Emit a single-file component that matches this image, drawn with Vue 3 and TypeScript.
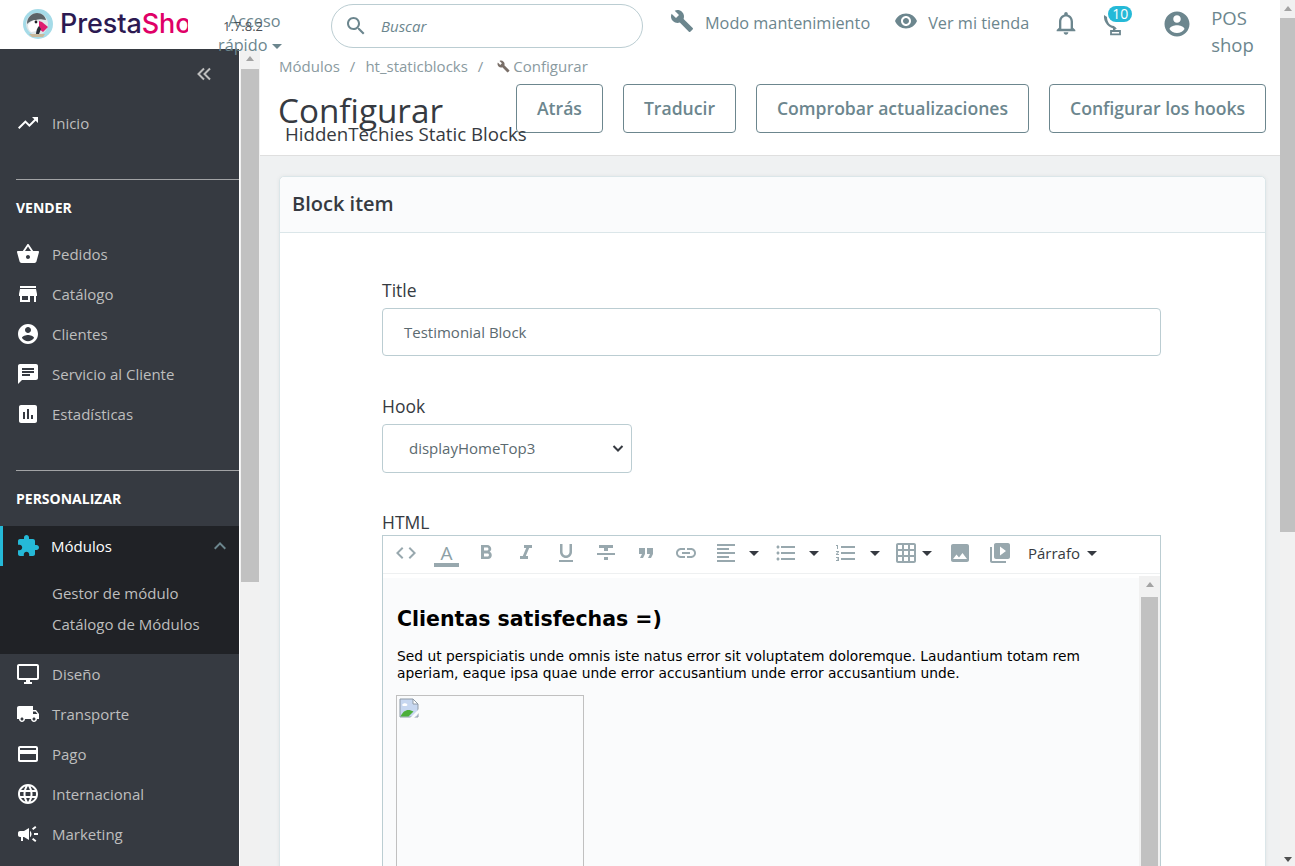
<script setup lang="ts">
interface NavItem { label: string; d: string; }
const icons = {
  trend: 'M16 6l2.29 2.29-4.88 4.88-4-4L2 16.59 3.41 18l6-6 4 4 6.3-6.29L22 12V6z',
  basket: 'M17.21 9l-4.38-6.56c-.19-.28-.51-.42-.83-.42-.32 0-.64.14-.83.43L6.79 9H2c-.55 0-1 .45-1 1 0 .09.01.18.04.27l2.54 9.27c.23.84 1 1.46 1.92 1.46h13c.92 0 1.69-.62 1.93-1.46l2.54-9.27L23 10c0-.55-.45-1-1-1h-4.79zM9 9l3-4.4L15 9H9zm3 8c-1.1 0-2-.9-2-2s.9-2 2-2 2 .9 2 2-.9 2-2 2z',
  store: 'M20 4H4v2h16V4zm1 10v-2l-1-5H4l-1 5v2h1v6h10v-6h4v6h2v-6h1zm-9 4H6v-4h6v4z',
  account: 'M12 2C6.48 2 2 6.48 2 12s4.48 10 10 10 10-4.48 10-10S17.52 2 12 2zm0 3c1.66 0 3 1.34 3 3s-1.34 3-3 3-3-1.34-3-3 1.34-3 3-3zm0 14.2c-2.5 0-4.71-1.28-6-3.22.03-1.99 4-3.08 6-3.08 1.99 0 5.97 1.09 6 3.08-1.29 1.94-3.5 3.22-6 3.22z',
  chat: 'M20 2H4c-1.1 0-1.99.9-1.99 2L2 22l4-4h14c1.1 0 2-.9 2-2V4c0-1.1-.9-2-2-2zM6 9h12v2H6V9zm8 5H6v-2h8v2zm4-6H6V6h12v2z',
  stats: 'M19 3H5c-1.1 0-2 .9-2 2v14c0 1.1.9 2 2 2h14c1.1 0 2-.9 2-2V5c0-1.1-.9-2-2-2zM9 17H7v-7h2v7zm4 0h-2V7h2v10zm4 0h-2v-4h2v4z',
  ext: 'M20.5 11H19V7c0-1.1-.9-2-2-2h-4V3.5C13 2.12 11.88 1 10.5 1S8 2.12 8 3.5V5H4c-1.1 0-1.99.9-1.99 2v3.8H3.5c1.49 0 2.7 1.21 2.7 2.7s-1.21 2.7-2.7 2.7H2V20c0 1.1.9 2 2 2h3.8v-1.5c0-1.49 1.21-2.7 2.7-2.7 1.49 0 2.7 1.21 2.7 2.7V22H17c1.1 0 2-.9 2-2v-4h1.5c1.38 0 2.5-1.12 2.5-2.5S21.88 11 20.5 11z',
  desktop: 'M21 2H3c-1.1 0-2 .9-2 2v12c0 1.1.9 2 2 2h7v2H8v2h8v-2h-2v-2h7c1.1 0 2-.9 2-2V4c0-1.1-.9-2-2-2zm0 14H3V4h18v12z',
  truck: 'M20 8h-3V4H3c-1.1 0-2 .9-2 2v11h2c0 1.66 1.34 3 3 3s3-1.34 3-3h6c0 1.66 1.34 3 3 3s3-1.34 3-3h2v-5l-3-4zM6 18.5c-.83 0-1.5-.67-1.5-1.5s.67-1.5 1.5-1.5 1.5.67 1.5 1.5-.67 1.5-1.5 1.5zm13.5-9l1.96 2.5H17V9.5h2.5zm-1.5 9c-.83 0-1.5-.67-1.5-1.5s.67-1.5 1.5-1.5 1.5.67 1.5 1.5-.67 1.5-1.5 1.5z',
  card: 'M20 4H4c-1.11 0-1.99.89-1.99 2L2 18c0 1.11.89 2 2 2h16c1.11 0 2-.89 2-2V6c0-1.11-.89-2-2-2zm0 14H4v-6h16v6zm0-10H4V6h16v2z',
  globe: 'M11.99 2C6.47 2 2 6.48 2 12s4.47 10 9.99 10C17.52 22 22 17.52 22 12S17.52 2 11.99 2zm6.93 6h-2.95c-.32-1.25-.78-2.45-1.38-3.56 1.84.63 3.37 1.91 4.33 3.56zM12 4.04c.83 1.2 1.48 2.53 1.91 3.96h-3.82c.43-1.43 1.08-2.76 1.91-3.96zM4.26 14C4.1 13.36 4 12.69 4 12s.1-1.36.26-2h3.38c-.08.66-.14 1.32-.14 2 0 .68.06 1.34.14 2H4.26zm.82 2h2.95c.32 1.25.78 2.45 1.38 3.56-1.84-.63-3.37-1.9-4.33-3.56zm2.95-8H5.08c.96-1.66 2.49-2.93 4.33-3.56C8.81 5.55 8.35 6.75 8.03 8zM12 19.96c-.83-1.2-1.48-2.53-1.91-3.96h3.82c-.43 1.43-1.08 2.76-1.91 3.96zM14.34 14H9.66c-.09-.66-.16-1.32-.16-2 0-.68.07-1.35.16-2h4.68c.09.65.16 1.32.16 2 0 .68-.07 1.34-.16 2zm.25 5.56c.6-1.11 1.06-2.31 1.38-3.56h2.95c-.96 1.65-2.49 2.93-4.33 3.56zM16.36 14c.08-.66.14-1.32.14-2 0-.68-.06-1.34-.14-2h3.38c.16.64.26 1.31.26 2s-.1 1.36-.26 2h-3.38z',
  campaign: 'M18 11v2h4v-2h-4zm-2 6.61c.96.71 2.21 1.65 3.2 2.39.4-.53.8-1.07 1.2-1.6-.99-.74-2.24-1.68-3.2-2.4-.4.54-.8 1.08-1.2 1.61zM20.4 5.6c-.4-.53-.8-1.07-1.2-1.6-.99.74-2.24 1.68-3.2 2.4.4.53.8 1.07 1.2 1.6.96-.72 2.21-1.65 3.2-2.4zM4 9c-1.1 0-2 .9-2 2v2c0 1.1.9 2 2 2h1v4h2v-4h1l5 3V6L8 9H4zm11.5 3c0-1.33-.58-2.53-1.5-3.35v6.69c.92-.81 1.5-2.01 1.5-3.34z',
  wrench: 'M22.7 19l-9.1-9.1c.9-2.3.4-5-1.5-6.9-2-2-5-2.4-7.4-1.3L9 6 6 9 1.6 4.7C.4 7.1.9 10.1 2.9 12.1c1.9 1.9 4.6 2.4 6.9 1.5l9.1 9.1c.4.4 1 .4 1.4 0l2.3-2.3c.5-.4.5-1.1.1-1.4z',
  eye: 'M12 4.5C7 4.5 2.73 7.61 1 12c1.73 4.39 6 7.5 11 7.5s9.27-3.11 11-7.5c-1.73-4.39-6-7.5-11-7.5zM12 17c-2.76 0-5-2.24-5-5s2.24-5 5-5 5 2.24 5 5-2.24 5-5 5zm0-8c-1.66 0-3 1.34-3 3s1.34 3 3 3 3-1.34 3-3-1.34-3-3-3z',
  bell: 'M12 22c1.1 0 2-.9 2-2h-4c0 1.1.9 2 2 2zm6-6v-5c0-3.07-1.63-5.64-4.5-6.32V4c0-.83-.67-1.5-1.5-1.5s-1.5.67-1.5 1.5v.68C7.64 5.36 6 7.92 6 11v5l-2 2v1h16v-1l-2-2zm-2 1H8v-6c0-2.48 1.51-4.5 4-4.5s4 2.02 4 4.5v6z',
  search: 'M15.5 14h-.79l-.28-.27C15.41 12.59 16 11.11 16 9.5 16 5.91 13.09 3 9.5 3S3 5.91 3 9.5 5.91 16 9.5 16c1.61 0 3.09-.59 4.23-1.57l.27.28v.79l5 4.99L20.49 19l-4.99-5zm-6 0C7.01 14 5 11.99 5 9.5S7.01 5 9.5 5 14 7.01 14 9.5 11.99 14 9.5 14z',
  chevUp: 'M7.41 15.41L12 10.83l4.59 4.58L18 14l-6-6-6 6z',
  code: 'M9.4 16.6L4.8 12l4.6-4.6L8 6l-6 6 6 6 1.4-1.4zm5.2 0l4.6-4.6-4.6-4.6L16 6l6 6-6 6-1.4-1.4z',
  bold: 'M15.6 10.79c.97-.67 1.65-1.77 1.65-2.79 0-2.26-1.75-4-4-4H7v14h7.04c2.09 0 3.71-1.7 3.71-3.79 0-1.52-.86-2.82-2.15-3.42zM10 6.5h3c.83 0 1.5.67 1.5 1.5s-.67 1.5-1.5 1.5h-3v-3zm3.5 9H10v-3h3.5c.83 0 1.5.67 1.5 1.5s-.67 1.5-1.5 1.5z',
  italic: 'M10 4v3h2.21l-3.42 8H6v3h8v-3h-2.21l3.42-8H18V4z',
  underline: 'M12 17c3.31 0 6-2.69 6-6V3h-2.5v8c0 1.93-1.57 3.5-3.5 3.5S8.5 12.93 8.5 11V3H6v8c0 3.31 2.69 6 6 6zm-7 2v2h14v-2H5z',
  strike: 'M10 19h4v-3h-4v3zM5 4v3h5v3h4V7h5V4H5zM3 14h18v-2H3v2z',
  quote: 'M6 17h3l2-4V7H5v6h3zm8 0h3l2-4V7h-6v6h3z',
  link: 'M3.9 12c0-1.71 1.39-3.1 3.1-3.1h4V7H7c-2.76 0-5 2.24-5 5s2.24 5 5 5h4v-1.9H7c-1.71 0-3.1-1.39-3.1-3.1zM8 13h8v-2H8v2zm9-6h-4v1.9h4c1.71 0 3.1 1.39 3.1 3.1s-1.39 3.1-3.1 3.1h-4V17h4c2.76 0 5-2.24 5-5s-2.24-5-5-5z',
  alignLeft: 'M15 15H3v2h12v-2zm0-8H3v2h12V7zM3 13h18v-2H3v2zm0 8h18v-2H3v2zM3 3v2h18V3H3z',
  bullets: 'M4 10.5c-.83 0-1.5.67-1.5 1.5s.67 1.5 1.5 1.5 1.5-.67 1.5-1.5-.67-1.5-1.5-1.5zm0-6c-.83 0-1.5.67-1.5 1.5S3.17 7.5 4 7.5 5.5 6.83 5.5 6 4.83 4.5 4 4.5zm0 12c-.83 0-1.5.68-1.5 1.5s.68 1.5 1.5 1.5 1.5-.68 1.5-1.5-.67-1.5-1.5-1.5zM7 19h14v-2H7v2zm0-6h14v-2H7v2zm0-8v2h14V5H7z',
  numbers: 'M2 17h2v.5H3v1h1v.5H2v1h3v-4H2v1zm1-9h1V4H2v1h1v3zm-1 3h1.8L2 13.1v.9h3v-1H3.2L5 10.9V10H2v1zm5-6v2h14V5H7zm0 14h14v-2H7v2zm0-6h14v-2H7v2z',
  table: 'M20 2H4c-1.1 0-2 .9-2 2v16c0 1.1.9 2 2 2h16c1.1 0 2-.9 2-2V4c0-1.1-.9-2-2-2zM8 20H4v-4h4v4zm0-6H4v-4h4v4zm0-6H4V4h4v4zm6 12h-4v-4h4v4zm0-6h-4v-4h4v4zm0-6h-4V4h4v4zm6 12h-4v-4h4v4zm0-6h-4v-4h4v4zm0-6h-4V4h4v4z',
  image: 'M21 19V5c0-1.1-.9-2-2-2H5c-1.1 0-2 .9-2 2v14c0 1.1.9 2 2 2h14c1.1 0 2-.9 2-2zM8.5 13.5l2.5 3.01L14.5 12l4.5 6H5l3.5-4.5z',
  video: 'M4 6H2v14c0 1.1.9 2 2 2h14v-2H4V6zm16-4H8c-1.1 0-2 .9-2 2v12c0 1.1.9 2 2 2h12c1.1 0 2-.9 2-2V4c0-1.1-.9-2-2-2zm-8 12.5v-9l6 4.5-6 4.5z',
}
const sell: NavItem[] = [
  { label: 'Pedidos', d: icons.basket },
  { label: 'Catálogo', d: icons.store },
  { label: 'Clientes', d: icons.account },
  { label: 'Servicio al Cliente', d: icons.chat },
  { label: 'Estadísticas', d: icons.stats },
]
const custom: NavItem[] = [
  { label: 'Diseño', d: icons.desktop },
  { label: 'Transporte', d: icons.truck },
  { label: 'Pago', d: icons.card },
  { label: 'Internacional', d: icons.globe },
  { label: 'Marketing', d: icons.campaign },
]
const toolsB = [icons.bold, icons.italic, icons.underline, icons.strike, icons.quote, icons.link]
const actions = ['Atrás', 'Traducir', 'Comprobar actualizaciones', 'Configurar los hooks']
</script>

<template>
  <div class="app">
    <div class="col">
      <header class="top">
        <div class="logo">
          <svg viewBox="0 0 30 30" width="30" height="30">
            <circle cx="15" cy="15" r="15" fill="#a5dbe8" />
            <circle cx="14" cy="15" r="11" fill="#dfe6e8" />
            <path d="M4 15C4 8 9 4 14 4c5 0 8 3 9 7-5-1-8-1-10 0-4 0-7 2-9 4z" fill="#5c6468" />
            <path d="M5 16c2-3 5-5 9-5l3 4-3 7-6 1c-2-2-3-4-3-7z" fill="#fff" />
            <circle cx="13" cy="13" r="1.4" fill="#1c1f24" />
            <path d="M16 12l3 1 6 5-5 5-4-3z" fill="#df1d70" />
            <path d="M16 17l2 3-2 5-3 1c0-4 1-7 3-9z" fill="#2a2f38" />
            <path d="M6 25h16l-2 3H9z" fill="#c8b89a" />
          </svg>
          <span class="logo-clip"><span class="p1">Presta</span><span class="p2">Shop</span></span>
        </div>
        <span class="version">1.7.8.2</span>
        <div class="quick">
          <span>Acceso</span>
          <span class="quick-2">rápido <i class="caret grey"></i></span>
        </div>
        <div class="search">
          <svg viewBox="0 0 24 24" width="24" height="24"><path :d="icons.search" /></svg>
          <span>Buscar</span>
        </div>
        <div class="maint">
          <svg viewBox="0 0 24 24" width="24" height="24"><path :d="icons.wrench" /></svg>
          <span>Modo mantenimiento</span>
        </div>
        <div class="shop">
          <svg viewBox="0 0 24 24" width="24" height="24"><path :d="icons.eye" /></svg>
          <span>Ver mi tienda</span>
        </div>
        <svg class="bell" viewBox="0 0 24 24" width="28" height="28"><path :d="icons.bell" /></svg>
        <div class="dish">
          <svg viewBox="0 0 24 24" width="24" height="24">
            <path d="M1 3C0 10 6 17 14 17l-3-3C7 14 4 10 4 5z" />
            <path d="M10 15h2.4v3H10z" />
            <path d="M8 19h9v3.4H8z" fill="none" stroke="#6c868e" stroke-width="1.8" />
          </svg>
          <b class="badge">10</b>
        </div>
        <svg class="acct" viewBox="0 0 24 24" width="30" height="30"><path :d="icons.account" /></svg>
        <div class="who">POS shop</div>
      </header>

      <div class="body">
        <aside class="side">
          <div class="collapse">
            <svg viewBox="0 0 18 18" width="18" height="18"><path d="M9 3.5 3.5 9 9 14.5M15 3.5 9.5 9 15 14.5" /></svg>
          </div>
          <div class="item home">
            <svg viewBox="0 0 24 24"><path :d="icons.trend" /></svg>
            <span>Inicio</span>
          </div>
          <hr class="rule first" />
          <h4 class="sect s1">VENDER</h4>
          <div class="group">
            <div v-for="n in sell" :key="n.label" class="item">
              <svg viewBox="0 0 24 24"><path :d="n.d" /></svg>
              <span>{{ n.label }}</span>
            </div>
          </div>
          <hr class="rule second" />
          <h4 class="sect s2">PERSONALIZAR</h4>
          <div class="active">
            <div class="item cur">
              <svg viewBox="0 0 24 24"><path :d="icons.ext" /></svg>
              <span>Módulos</span>
              <svg class="up" viewBox="0 0 24 24"><path :d="icons.chevUp" /></svg>
            </div>
            <div class="sub first-sub">Gestor de módulo</div>
            <div class="sub">Catálogo de Módulos</div>
          </div>
          <div class="group">
            <div v-for="n in custom" :key="n.label" class="item">
              <svg viewBox="0 0 24 24"><path :d="n.d" /></svg>
              <span>{{ n.label }}</span>
            </div>
          </div>
        </aside>

        <div class="scroll side-scroll">
          <i class="arrow"></i>
          <div class="thumb"></div>
        </div>

        <main class="main">
          <div class="head">
            <nav class="crumbs">
              <span>Módulos</span><em>/</em><span>ht_staticblocks</span><em>/</em>
              <svg viewBox="0 0 24 24" width="13" height="13"><path :d="icons.wrench" /></svg>
              <span>Configurar</span>
            </nav>
            <div class="title-row">
              <div class="titles">
                <h1>Configurar</h1>
                <h2>HiddenTechies Static Blocks</h2>
              </div>
              <div class="actions">
                <button v-for="a in actions" :key="a" type="button">{{ a }}</button>
              </div>
            </div>
          </div>

          <section class="card">
            <div class="card-head">Block item</div>
            <div class="form">
              <label>Title</label>
              <div class="input">Testimonial Block</div>
              <label class="l-hook">Hook</label>
              <div class="select">
                <span>displayHomeTop3</span>
                <svg viewBox="0 0 12 12" width="12" height="12"><path d="M1.5 4 6 8.5 10.5 4" /></svg>
              </div>
              <label class="l-html">HTML</label>
              <div class="editor">
                <div class="toolbar">
                  <svg class="t" viewBox="0 0 24 24"><path :d="icons.code" /></svg>
                  <span class="color-a">A</span>
                  <svg v-for="d in toolsB" :key="d" class="t" viewBox="0 0 24 24"><path :d="d" /></svg>
                  <svg class="t t-drop" viewBox="0 0 24 24"><path :d="icons.alignLeft" /></svg>
                  <i class="caret dark c-a"></i>
                  <svg class="t t-drop" viewBox="0 0 24 24"><path :d="icons.bullets" /></svg>
                  <i class="caret dark c-b"></i>
                  <svg class="t t-drop" viewBox="0 0 24 24"><path :d="icons.numbers" /></svg>
                  <i class="caret dark c-c"></i>
                  <svg class="t t-table" viewBox="0 0 24 24"><path :d="icons.table" /></svg>
                  <i class="caret dark c-d"></i>
                  <svg class="t" viewBox="0 0 24 24"><path :d="icons.image" /></svg>
                  <svg class="t" viewBox="0 0 24 24"><path :d="icons.video" /></svg>
                  <span class="para">Párrafo</span>
                  <i class="caret dark c-e"></i>
                </div>
                <div class="edit-body">
                  <div class="doc">
                    <h3>Clientas satisfechas =)</h3>
                    <p>Sed ut perspiciatis unde omnis iste natus error sit voluptatem doloremque. Laudantium totam rem aperiam, eaque ipsa quae unde error accusantium unde error accusantium unde.</p>
                    <div class="broken">
                      <svg viewBox="0 0 20 20" width="20" height="20">
                        <path d="M1 1h13l5 5v13H1z" fill="#c7d7f0" stroke="#8f9aa6" stroke-width="1" />
                        <path d="M14 1v5h5z" fill="#ffffff" stroke="#8f9aa6" stroke-width="1" />
                        <path d="M1.5 18.5c3-7 8-8 13-5l-5 5z" fill="#4caf3a" />
                        <path d="M11 20l9-9v4l-5 5z" fill="#fafbfc" />
                        <path d="M3 7c1-2 4-2 5-1 1 1 0 2-1 2H4z" fill="#ffffff" />
                      </svg>
                    </div>
                  </div>
                  <div class="scroll edit-scroll">
                    <i class="arrow"></i>
                    <div class="thumb"></div>
                  </div>
                </div>
              </div>
            </div>
          </section>
        </main>
      </div>
    </div>

    <div class="scroll page-scroll">
      <i class="arrow"></i>
      <div class="thumb"></div>
      <i class="arrow-down"></i>
    </div>
  </div>
</template>

<style scoped>
.app { width: 1295px; height: 866px; overflow: hidden; display: flex; font-family: "Open Sans", sans-serif; color: #363a41; background: #fff; }
.col { width: 1280px; height: 866px; flex: none; display: flex; flex-direction: column; }
svg { display: block; flex: none; }

.top { height: 49px; flex: none; display: flex; align-items: flex-start; background: #fff; position: relative; z-index: 2; }
.logo { display: flex; align-items: center; margin: 9px 0 0 23px; height: 30px; width: 165px; flex: none; }
.logo-clip { width: 128px; margin-left: 7px; overflow: hidden; white-space: nowrap; font: 500 27px/30px Inter, sans-serif; letter-spacing: -.1px; }
.p1 { color: #2c1a52; }
.p2 { color: #df0067; }
.version { position: absolute; left: 223px; top: 18px; font-size: 13px; line-height: 16px; color: #4a5056; }
.quick { margin: 9px 0 0 26px; font-size: 16.25px; line-height: 24px; color: #6c868e; flex: none; height: 24px; display: flex; flex-direction: column; padding-left: 14px; width: 66px; white-space: nowrap; }
.quick-2 { margin-left: -10px; }
.caret { display: inline-block; width: 0; height: 0; border-left: 5px solid transparent; border-right: 5px solid transparent; border-top: 5px solid #6c868e; vertical-align: 2px; }
.caret.dark { border-top-color: #363a41; flex: none; }
.search { width: 312px; height: 44px; box-sizing: border-box; margin: 4px 0 0 37px; border: 1px solid #bbcdd2; border-radius: 22px; display: flex; align-items: center; padding-left: 12px; gap: 13px; flex: none; }
.search svg { fill: #6c868e; }
.search span { font-size: 15px; font-style: italic; color: #6c868e; }
.maint, .shop { display: flex; align-items: center; gap: 11px; color: #6c868e; font-size: 16.25px; line-height: 24px; flex: none; margin-top: 11px; }
.maint svg, .shop svg, .bell, .dish svg, .acct { fill: #6c868e; }
.maint { margin-left: 27px; }
.maint svg { margin-top: -4px; }
.shop { margin-left: 24px; gap: 10px; }
.shop svg { margin-top: -4px; }
.bell { margin: 9px 0 0 23px; }
.dish { position: relative; margin: 12px 0 0 23px; width: 24px; height: 24px; flex: none; }
.badge { position: absolute; left: 5px; top: -6px; min-width: 24px; height: 16px; box-sizing: border-box; border-radius: 8px; background: #25b9d7; color: #fff; font-size: 14px; font-weight: 400; line-height: 16px; text-align: center; }
.acct { margin: 9px 0 0 35px; }
.who { width: 50px; margin: 4px 0 0 19px; font-size: 18.5px; line-height: 27px; color: #6c868e; flex: none; }

.scroll { background: #f1f1f1; position: relative; box-sizing: border-box; }
.arrow { position: absolute; top: 6px; left: 50%; margin-left: -4px; width: 0; height: 0; border-left: 4px solid transparent; border-right: 4px solid transparent; border-bottom: 5px solid #a3a3a3; }
.arrow-down { position: absolute; bottom: 4px; left: 50%; margin-left: -4px; width: 0; height: 0; border-left: 4px solid transparent; border-right: 4px solid transparent; border-top: 5px solid #505050; }
.thumb { background: #c1c1c1; position: absolute; }

.body { flex: 1; display: flex; min-height: 0; }
.side { width: 240px; flex: none; background: #363a41; overflow: hidden; border-right: 1px solid #fff; box-sizing: border-box; }
.collapse { height: 49px; display: flex; justify-content: flex-end; align-items: center; padding-right: 26px; box-sizing: border-box; }
.collapse svg { fill: none; stroke: #bebebe; stroke-width: 2; }
.item { height: 40px; display: flex; align-items: center; padding-left: 16px; gap: 12px; color: #bebebe; font-size: 15px; }
.item svg { width: 24px; height: 24px; fill: #fff; }
.home { height: 50px; }
.rule { border: 0; border-top: 1px solid #bebebe; opacity: .8; margin: 0 0 0 16px; }
.rule.first { margin-top: 31px; }
.rule.second { margin-top: 36px; }
.sect { margin: 0; box-sizing: border-box; padding-left: 16px; color: #fff; font-size: 14px; line-height: 19px; font-weight: 700; }
.s1 { height: 54px; padding-top: 18px; }
.s2 { height: 55px; padding-top: 18px; }
.active { background: #202226; height: 128px; }
.cur { position: relative; padding-left: 15px; color: #fff; border-left: 3px solid #25b9d7; height: 40px; gap: 11px; box-sizing: border-box; }
.cur svg:first-child { fill: #25b9d7; margin-left: -2px; }
.cur .up { position: absolute; right: 7px; top: 8px; fill: #6c868e; }
.sub { height: 31px; line-height: 31px; padding-left: 52px; color: #bebebe; font-size: 15px; }
.first-sub { margin-top: 12px; }

.side-scroll { width: 20px; flex: none; }
.side-scroll .thumb { left: 1px; width: 18px; top: 20px; height: 513px; }
.side-scroll .arrow { top: 7px; }

.main { flex: 1; min-width: 0; background: #eff1f2; overflow: hidden; }
.head { height: 107px; box-sizing: border-box; background: #fff; border-bottom: 1px solid #dfdfdf; padding: 0 14px 0 19px; }
.crumbs { display: flex; align-items: center; height: 16px; padding-top: 9px; box-sizing: content-box; font-size: 15px; color: #8a9a9f; line-height: 16px; }
.crumbs em { font-style: normal; margin: 0 10px; }
.crumbs svg { fill: #7a6f68; margin: 0 3px 0 4px; }
.title-row { display: flex; justify-content: space-between; margin-top: 10px; }
.titles { width: 237px; flex: none; position: relative; }
h1 { margin: 0 0 0 -1px; font-size: 33.25px; font-weight: 400; line-height: 48px; padding-top: 2px; color: #363a41; white-space: nowrap; }
h2 { margin: -12px 0 0 6px; font-size: 18.7px; font-weight: 400; line-height: 24px; color: #363a41; white-space: nowrap; position: relative; z-index: 1; }
.actions { display: flex; gap: 20px; height: 49px; }
button { height: 49px; box-sizing: border-box; padding: 0 20px 2px; background: transparent; border: 1px solid #6c868e; border-radius: 4px; color: #6c868e; font: 600 17.58px "Open Sans", sans-serif; white-space: nowrap; }

.card { margin: 20px 14px 0 19px; background: #fff; border: 1px solid #dbe6e9; border-radius: 5px; box-shadow: 0 0 4px rgba(0,0,0,.06); }
.card-head { height: 56px; box-sizing: border-box; padding-left: 12px; background: #fafbfc; border-bottom: 1px solid #dbe6e9; font-size: 20px; font-weight: 600; line-height: 53px; color: #363a41; border-radius: 5px 5px 0 0; }
.form { padding: 45px 0 0 102px; width: 779px; }
label { display: block; font-size: 17.5px; line-height: 24px; color: #363a41; }
.input { margin-top: 6px; height: 48px; box-sizing: border-box; border: 1px solid #bbcdd2; border-radius: 4px; padding-left: 21px; line-height: 46px; font-size: 15px; color: #5b6a70; }
.l-hook { margin-top: 38px; }
.select { margin-top: 6px; width: 250px; height: 49px; box-sizing: border-box; border: 1px solid #bbcdd2; border-radius: 4px; padding: 0 7px 2px 26px; display: flex; align-items: center; justify-content: space-between; font-size: 15px; color: #5b6a70; }
.select svg { fill: none; stroke: #363a41; stroke-width: 2; }
.l-html { margin-top: 37px; height: 25px; }
.editor { border: 1px solid #bbcdd2; border-bottom: 0; height: 350px; box-sizing: border-box; background: #fff; display: flex; flex-direction: column; }
.toolbar { height: 38px; flex: none; box-sizing: border-box; padding: 0 0 3px 11px; border-bottom: 1px solid #eef0f1; display: flex; align-items: center; background: #fff; }
.t { width: 24px; height: 24px; fill: #98a8ae; margin-right: 16px; }
.color-a { width: 25px; box-sizing: border-box; margin-right: 15px; text-align: center; font-size: 19px; line-height: 20px; color: #8ea0a6; border-bottom: 4px solid #98a8ae; margin-top: 4px; }
.t-drop { margin-right: 11px; }
.c-a { margin-right: 15px; }
.c-b { margin-right: 15px; }
.c-c { margin-right: 14px; margin-left: 1px; }
.t-table { margin-right: 4px; }
.c-d { margin-right: 16px; }
.para { font-size: 15px; color: #363a41; }
.c-e { margin-left: 7px; }
.edit-body { display: flex; flex: 1; min-height: 0; margin-top: 2px; }
.doc { flex: 1; min-width: 0; background: #fafbfc; margin-top: 2px; padding: 26px 14px 0; font-family: "DejaVu Sans", sans-serif; color: #000; }
h3 { margin: 0; font-size: 20.5px; font-weight: 700; line-height: 30px; color: #000; font-family: "DejaVu Sans", sans-serif; }
p { margin: 14px 0 0; font-size: 13.8px; line-height: 17px; color: #000; width: 700px; }
.broken { margin: 13px 0 0 -1px; width: 188px; height: 200px; border: 1px solid #c0c0c0; padding: 2px; box-sizing: border-box; }
.edit-scroll { width: 21px; flex: none; }
.edit-scroll .thumb { left: 2px; width: 17px; top: 21px; bottom: 0; }
.page-scroll { width: 15px; flex: none; }
.page-scroll .thumb { left: 0; width: 15px; top: 18px; height: 514px; }
</style>
